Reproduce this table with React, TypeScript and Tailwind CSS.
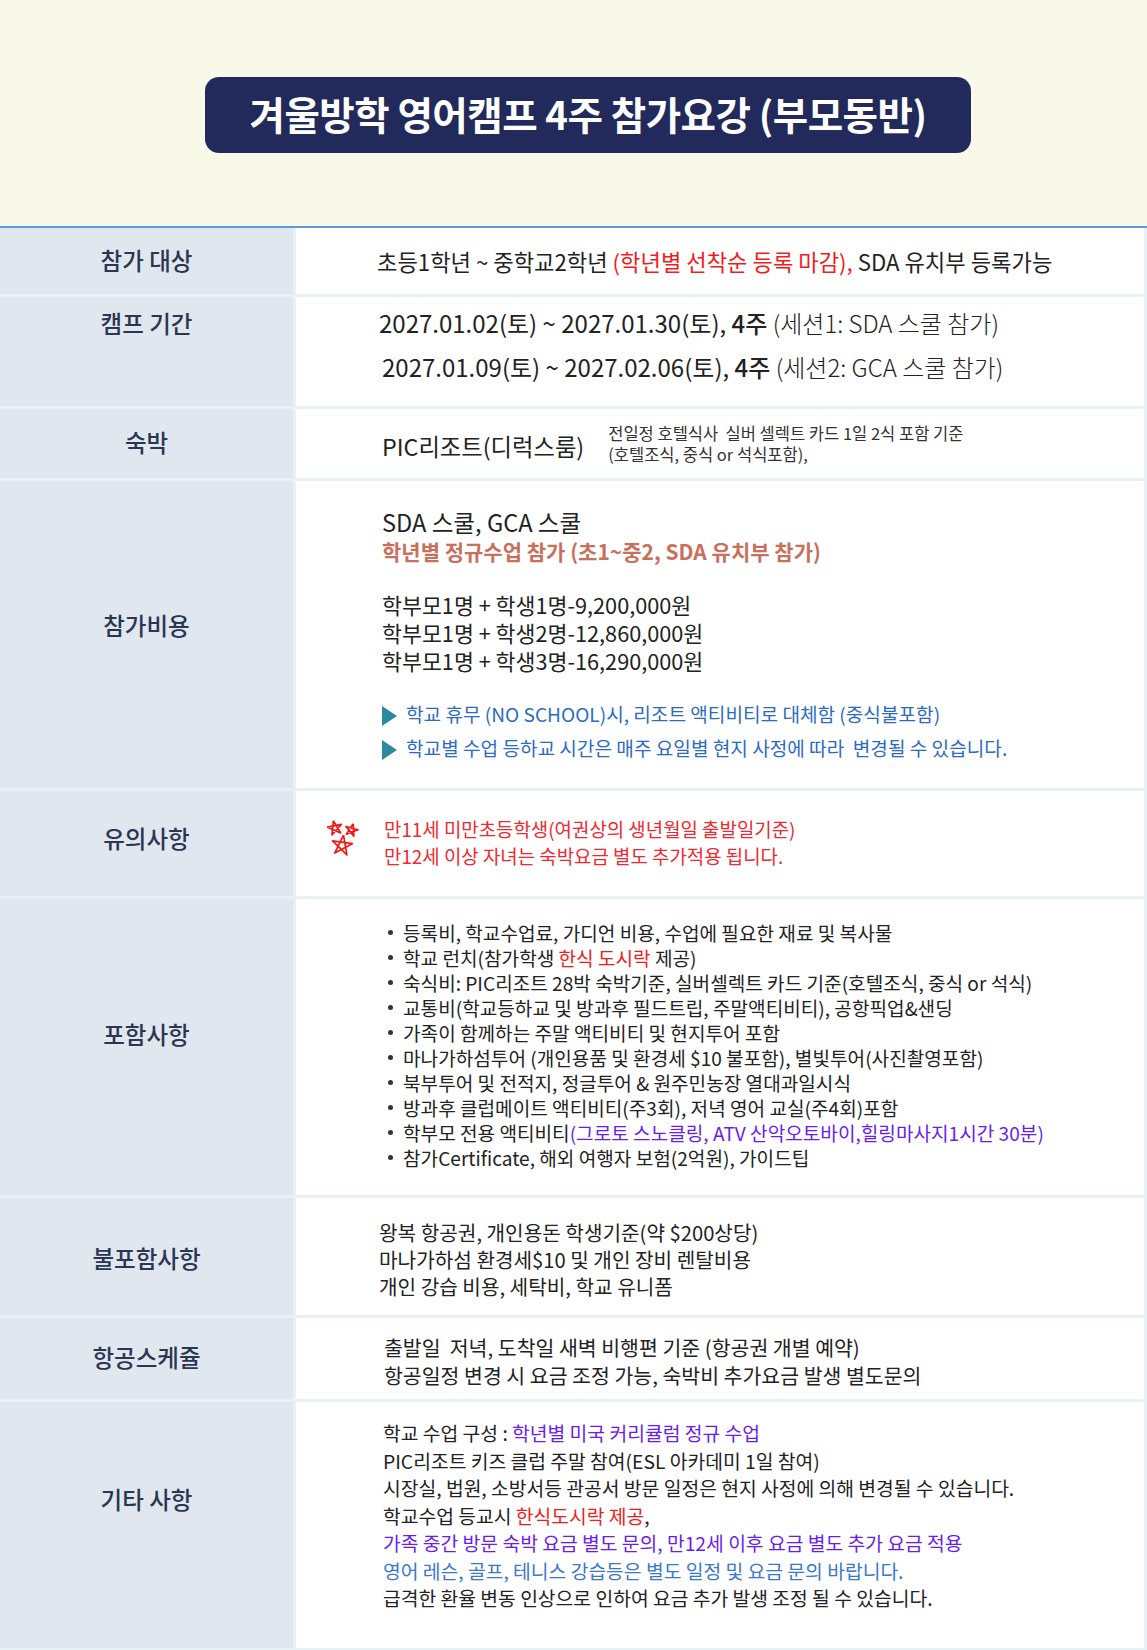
import type { ReactNode } from "react";

const KR = "font-['Noto_Sans_CJK_KR','Noto_Sans',sans-serif]";

// pentagram drawn stroke by stroke, like a hand doodle
const star = (cx: number, cy: number, r: number, rot: number) => {
  const pts = [0, 2, 4, 1, 3, 0].map((i) => {
    const a = ((-90 + i * 72 + rot) * Math.PI) / 180;
    return `${(cx + r * Math.cos(a)).toFixed(1)},${(cy + r * Math.sin(a)).toFixed(1)}`;
  });
  return "M" + pts.join(" L");
};

function Stars() {
  return (
    <svg width="32" height="37" viewBox="0 0 32 37" className="shrink-0 mt-[28px]">
      <g fill="none" stroke="#f01818" strokeWidth="1.7" strokeLinejoin="round">
        <path d={star(8, 9, 7.5, -12)} />
        <path d={star(24.5, 11, 6.5, 15)} />
        <path d={star(15, 26.5, 10.5, 8)} />
      </g>
    </svg>
  );
}

function Row({ label, labelPad, h, children }: { label: string; labelPad: string; h: string; children: ReactNode }) {
  return (
    <div className={`grid grid-cols-[293px_1fr] gap-x-[3px] pr-[3px] ${h}`}>
      <div className={`bg-[#e0e7ef] flex justify-center ${labelPad}`}>
        <span className="text-[23.5px] leading-[30px] font-medium text-[#2a3652]">{label}</span>
      </div>
      <div className="bg-white text-[#222]">{children}</div>
    </div>
  );
}

const Tri = () => (
  <span className="inline-block w-0 h-0 border-y-[10px] border-y-transparent border-l-[15px] border-l-[#2b8a9d] mr-[9px] translate-y-[2px]" />
);

const Dot = () => <span className="inline-block w-[5px] h-[5px] rounded-full bg-[#333] mr-[10px] mb-[3px]" />;

export default function App() {
  const included: ReactNode[] = [
    "등록비, 학교수업료, 가디언 비용, 수업에 필요한 재료 및 복사물",
    <>학교 런치(참가학생 <span className="text-[#f41b1b]">한식 도시락</span> 제공)</>,
    "숙식비: PIC리조트 28박 숙박기준, 실버셀렉트 카드 기준(호텔조식, 중식 or 석식)",
    "교통비(학교등하교 및 방과후 필드트립, 주말액티비티), 공항픽업&샌딩",
    "가족이 함께하는 주말 액티비티 및 현지투어 포함",
    "마나가하섬투어 (개인용품 및 환경세 $10 불포함), 별빛투어(사진촬영포함)",
    "북부투어 및 전적지, 정글투어 & 원주민농장 열대과일시식",
    "방과후 클럽메이트 액티비티(주3회), 저녁 영어 교실(주4회)포함",
    <>학부모 전용 액티비티<span className="text-[#6a1cf0]">(그로토 스노클링, ATV 산악오토바이,힐링마사지1시간 30분)</span></>,
    "참가Certificate, 해외 여행자 보험(2억원), 가이드팁",
  ];

  return (
    <div className={`w-[1147px] bg-white ${KR}`}>
      <div className="h-[226px] bg-[#f9f9ea] pt-[77px]">
        <div className="ml-[205px] w-[766px] h-[76px] rounded-[14px] bg-[#212a5a] flex items-center justify-center">
          <h1 className="text-white text-[38.5px] font-bold tracking-[-0.5px] leading-none pb-[3px]">
            겨울방학 영어캠프 4주 참가요강 (부모동반)
          </h1>
        </div>
      </div>
      <div className="h-[2px] bg-[#5b9be6]" />

      <div className="bg-[#e6f2f5] flex flex-col gap-y-[3px] pb-[2px]">
        <Row label="참가 대상" labelPad="pt-[17px]" h="h-[66px]">
          <p className="pl-[81px] pt-[18px] text-[22.2px] leading-[30px]">
            초등1학년 ~ 중학교2학년 <span className="text-[#f41b1b]">(학년별 선착순 등록 마감),</span> SDA 유치부 등록가능
          </p>
        </Row>

        <Row label="캠프 기간" labelPad="pt-[11px]" h="h-[109px]">
          <div className="pl-[83px] pt-[11px] flex flex-col gap-[14px] text-[24px] leading-[30px]">
            <p>2027.01.02(토) ~ 2027.01.30(토), <span className="font-medium">4주</span> <span className="font-light">(세션1: SDA 스쿨 참가)</span></p>
            <p className="ml-[3px]">2027.01.09(토) ~ 2027.02.06(토), <span className="font-medium">4주</span> <span className="font-light">(세션2: GCA 스쿨 참가)</span></p>
          </div>
        </Row>

        <Row label="숙박" labelPad="pt-[18px]" h="h-[69px]">
          <div className="pl-[86px] flex items-start gap-[24px]">
            <p className="mt-[22px] text-[23.3px] leading-[30px]">PIC리조트(디럭스룸)</p>
            <div className="mt-[14px] text-[16.5px] leading-[21px] text-[#333]">
              <p>전일정 호텔식사&nbsp; 실버 셀렉트 카드 1일 2식 포함 기준</p>
              <p>(호텔조식, 중식 or 석식포함),</p>
            </div>
          </div>
        </Row>

        <Row label="참가비용" labelPad="pt-[129px]" h="h-[307px]">
          <div className="pl-[86px] pt-[26px]">
            <p className="text-[23.6px] leading-[30px]">SDA 스쿨, GCA 스쿨</p>
            <p className="text-[21px] leading-[28px] font-bold text-[#c9705c]">학년별 정규수업 참가 (초1~중2, SDA 유치부 참가)</p>
            <div className="mt-[26px] text-[21.7px] leading-[28px]">
              <p>학부모1명 + 학생1명-9,200,000원</p>
              <p>학부모1명 + 학생2명-12,860,000원</p>
              <p>학부모1명 + 학생3명-16,290,000원</p>
            </div>
            <div className="mt-[22px] text-[19.1px] leading-[34px] text-[#2c6cc0]">
              <p className="flex items-center"><Tri />학교 휴무 (NO SCHOOL)시, 리조트 액티비티로 대체함 (중식불포함)</p>
              <p className="flex items-center"><Tri />학교별 수업 등하교 시간은 매주 요일별 현지 사정에 따라&nbsp; 변경될 수 있습니다.</p>
            </div>
          </div>
        </Row>

        <Row label="유의사항" labelPad="pt-[32px]" h="h-[105px]">
          <div className="pl-[31px] flex items-start gap-[25px]">
            <Stars />
            <div className="pt-[24px] text-[18.9px] leading-[27px] text-[#f0282f]">
              <p>만11세 미만초등학생(여권상의 생년월일 출발일기준)</p>
              <p>만12세 이상 자녀는 숙박요금 별도 추가적용 됩니다.</p>
            </div>
          </div>
        </Row>

        <Row label="포함사항" labelPad="pt-[120px]" h="h-[296px]">
          <ul className="pl-[92px] pt-[22px] text-[19.1px] leading-[25px]">
            {included.map((t, i) => (
              <li key={i} className="flex items-center">
                <Dot />
                <span>{t}</span>
              </li>
            ))}
          </ul>
        </Row>

        <Row label="불포함사항" labelPad="pt-[45px]" h="h-[117px]">
          <div className="pl-[83px] pt-[21px] text-[20.2px] leading-[27px]">
            <p>왕복 항공권, 개인용돈 학생기준(약 $200상당)</p>
            <p>마나가하섬 환경세$10 및 개인 장비 렌탈비용</p>
            <p>개인 강습 비용, 세탁비, 학교 유니폼</p>
          </div>
        </Row>

        <Row label="항공스케쥴" labelPad="pt-[24px]" h="h-[81px]">
          <div className="pl-[88px] pt-[15px] text-[20.5px] leading-[28px]">
            <p>출발일&nbsp; 저녁, 도착일 새벽 비행편 기준 (항공권 개별 예약)</p>
            <p>항공일정 변경 시 요금 조정 가능, 숙박비 추가요금 발생 별도문의</p>
          </div>
        </Row>

        <Row label="기타 사항" labelPad="pt-[82px]" h="h-[246px]">
          <div className="pl-[87px] pt-[18px] text-[19.3px] leading-[27.5px]">
            <p>학교 수업 구성 : <span className="text-[#6a1cf0]">학년별 미국 커리큘럼 정규 수업</span></p>
            <p>PIC리조트 키즈 클럽 주말 참여(ESL 아카데미 1일 참여)</p>
            <p>시장실, 법원, 소방서등 관공서 방문 일정은 현지 사정에 의해 변경될 수 있습니다.</p>
            <p>학교수업 등교시 <span className="text-[#f41b1b]">한식도시락 제공</span>,</p>
            <p className="text-[#6a1cf0]">가족 중간 방문 숙박 요금 별도 문의, 만12세 이후 요금 별도 추가 요금 적용</p>
            <p className="text-[#3a78cc]">영어 레슨, 골프, 테니스 강습등은 별도 일정 및 요금 문의 바랍니다.</p>
            <p>급격한 환율 변동 인상으로 인하여 요금 추가 발생 조정 될 수 있습니다.</p>
          </div>
        </Row>
      </div>
    </div>
  );
}
